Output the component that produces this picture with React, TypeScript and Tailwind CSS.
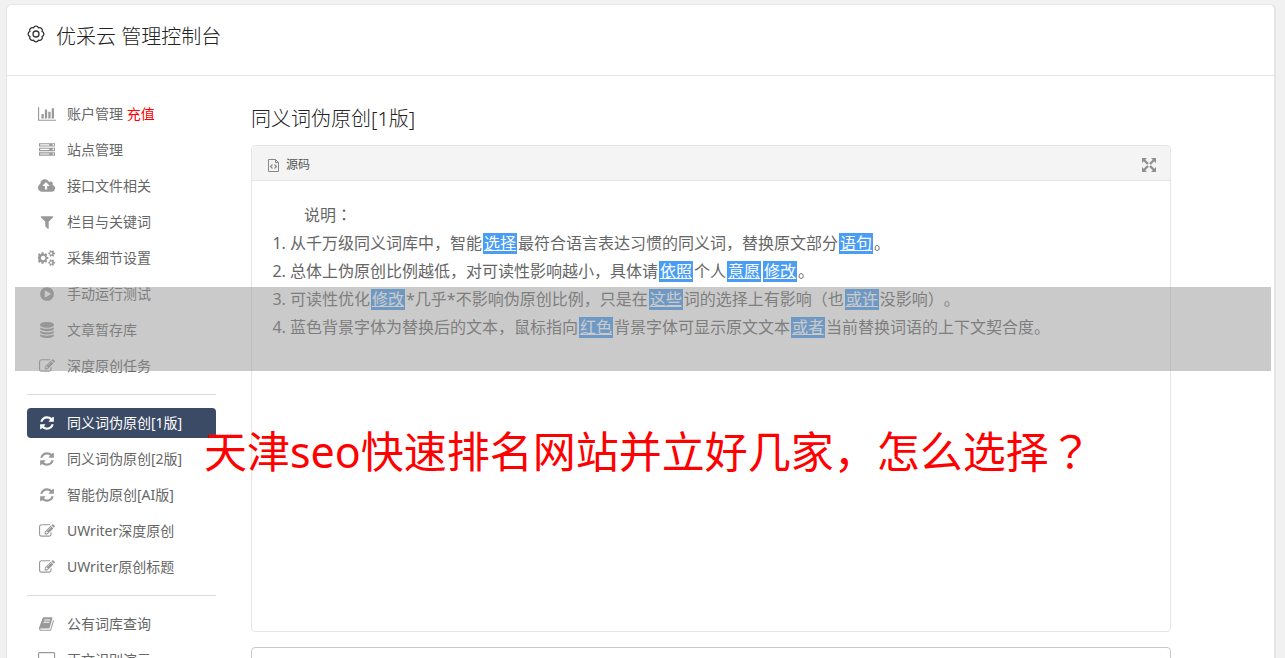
import type { ReactNode } from "react"

const icons = {
  chart: {
    box: "0 0 2048 1792",
    d: "M640 896v512h-256v-512h256zm384-512v1024h-256v-1024h256zm1024 1152v128h-2048v-1536h128v1408h1920zm-640-896v768h-256v-768h256zm384-384v1152h-256v-1152h256z",
  },
  server: {
    box: "0 0 1792 1792",
    d: "M128 1408h1024v-128h-1024v128zm0-512h1024v-128h-1024v128zm1568 448q0-40-28-68t-68-28-68 28-28 68 28 68 68 28 68-28 28-68zm-1568-960h1024v-128h-1024v128zm1568 448q0-40-28-68t-68-28-68 28-28 68 28 68 68 28 68-28 28-68zm0-512q0-40-28-68t-68-28-68 28-28 68 28 68 68 28 68-28 28-68zm96 832v384h-1792v-384h1792zm0-512v384h-1792v-384h1792zm0-512v384h-1792v-384h1792z",
  },
  upload: {
    box: "-64 0 1920 1792",
    d: "M1216 864q0-14-9-23l-352-352q-9-9-23-9t-23 9l-351 351q-10 12-10 24 0 14 9 23t23 9h224v352q0 13 9.5 22.5t22.5 9.5h192q13 0 22.5-9.5t9.5-22.5v-352h224q13 0 22.5-9.5t9.5-22.5zm640 288q0 159-112.5 271.5t-271.5 112.5h-1088q-185 0-316.5-131.5t-131.5-316.5q0-130 70-240t188-165q-2-30-2-43 0-212 150-362t362-150q156 0 285.5 87t188.5 231q71-62 166-62 106 0 181 75t75 181q0 76-41 138 130 31 213.5 135.5t83.5 238.5z",
  },
  filter: {
    box: "0 0 1792 1792",
    d: "M1595 295q17 41-14 70l-493 493v742q0 42-39 59-13 5-25 5-27 0-45-19l-256-256q-19-19-19-45v-486l-493-493q-31-29-14-70 17-39 59-39h1280q42 0 59 39z",
  },
  cogs: {
    box: "0 0 1920 1792",
    d: "M832 896q0-106-75-181t-181-75-181 75-75 181 75 181 181 75 181-75 75-181zm768 512q0-52-38-90t-90-38-90 38-38 90q0 53 37.5 90.5t90.5 37.5 90.5-37.5 37.5-90.5zm0-1024q0-52-38-90t-90-38-90 38-38 90q0 53 37.5 90.5t90.5 37.5 90.5-37.5 37.5-90.5zm-448 421v185q0 10-7 19.5t-16 10.5l-155 24q-11 35-32 76 34 48 90 115 7 11 7 20 0 12-7 19-23 30-82.5 89.5t-78.5 59.5q-11 0-21-7l-115-90q-37 19-77 31-11 108-23 155-7 24-30 24h-186q-11 0-20-7.5t-10-17.5l-23-153q-34-10-75-31l-118 89q-7 7-20 7-11 0-21-8-144-133-144-160 0-9 7-19 10-14 41-53t47-61q-23-44-35-82l-152-24q-10-1-17-9.5t-7-19.5v-185q0-10 7-19.5t16-10.5l155-24q11-35 32-76-34-48-90-115-7-11-7-20 0-12 7-20 22-30 82-89t79-59q11 0 21 7l115 90q34-18 77-32 11-108 23-154 7-24 30-24h186q11 0 20 7.5t10 17.5l23 153q34 10 75 31l118-89q8-7 20-7 11 0 21 8 144 133 144 160 0 8-7 19-12 16-42 54t-45 60q23 48 34 82l152 23q10 2 17 10.5t7 19.5zm768 533v140q0 16-149 31-12 27-30 52 51 113 51 138 0 4-4 7-122 71-124 71-8 0-46-47t-52-68q-20 2-30 2t-30-2q-14 21-52 68t-46 47q-2 0-124-71-4-3-4-7 0-25 51-138-18-25-30-52-149-15-149-31v-140q0-16 149-31 13-29 30-52-51-113-51-138 0-4 4-7 4-2 35-20t59-34 30-16q8 0 46 46.500t52 67.500q20-2 30-2t30 2q51-71 92-112l6-2q4 0 124 70 4 3 4 7 0 25-51 138 17 23 30 52 149 15 149 31zm0-1024v140q0 16-149 31-12 27-30 52 51 113 51 138 0 4-4 7-122 71-124 71-8 0-46-47t-52-68q-20 2-30 2t-30-2q-14 21-52 68t-46 47q-2 0-124-71-4-3-4-7 0-25 51-138-18-25-30-52-149-15-149-31v-140q0-16 149-31 13-29 30-52-51-113-51-138 0-4 4-7 4-2 35-20t59-34 30-16q8 0 46 46.500t52 67.500q20-2 30-2t30 2q51-71 92-112l6-2q4 0 124 70 4 3 4 7 0 25-51 138 17 23 30 52 149 15 149 31z",
  },
  play: {
    box: "0 0 1792 1792",
    d: "M896 128q209 0 385.5 103t279.5 279.500 103 385.500-103 385.500-279.500 279.500-385.500 103-385.500-103-279.500-279.500-103-385.500 103-385.500 279.500-279.500 385.500-103zm384 823q32-18 32-55t-32-55l-544-320q-31-19-64-1-32 19-32 56v640q0 37 32 56 16 8 32 8 17 0 32-9z",
  },
  database: {
    box: "0 0 1792 1792",
    d: "M896 768q237 0 443-43t325-127v170q0 69-103 128t-280 93.500-385 34.500-385-34.500-280-93.500-103-128v-170q119 84 325 127t443 43zm0 768q237 0 443-43t325-127v170q0 69-103 128t-280 93.500-385 34.500-385-34.500-280-93.500-103-128v-170q119 84 325 127t443 43zm0-384q237 0 443-43t325-127v170q0 69-103 128t-280 93.500-385 34.500-385-34.500-280-93.500-103-128v-170q119 84 325 127t443 43zm0-1152q208 0 385 34.500t280 93.500 103 128v128q0 69-103 128t-280 93.500-385 34.500-385-34.500-280-93.500-103-128v-128q0-69 103-128t280-93.500 385-34.500z",
  },
  edit: {
    box: "0 0 1792 1792",
    d: "M888 1184l116-116-152-152-116 116v56h96v96h56zm440-720q-16-16-33 1l-350 350q-17 17-1 33t33-1l350-350q17-17 1-33zm80 594v190q0 119-84.500 203.500t-203.500 84.500h-832q-119 0-203.500-84.500t-84.500-203.500v-832q0-119 84.500-203.500t203.500-84.500h832q63 0 117 25 15 7 18 23 3 17-9 29l-49 49q-14 14-32 8-23-6-45-6h-832q-66 0-113 47t-47 113v832q0 66 47 113t113 47h832q66 0 113-47t47-113v-126q0-13 9-22l64-64q15-15 35-7t20 29zm-96-738l288 288-672 672h-288v-288zm444 132l-92 92-288-288 92-92q28-28 68-28t68 28l152 152q28 28 28 68t-28 68z",
  },
  refresh: {
    box: "0 0 1792 1792",
    d: "M1639 1056q0 5-1 7-64 268-268 434.500t-478 166.500q-146 0-282.500-55t-243.500-157l-129 129q-19 19-45 19t-45-19-19-45v-448q0-26 19-45t45-19h448q26 0 45 19t19 45-19 45l-137 137q71 66 161 102t187 36q134 0 250-65t186-179q11-17 53-117 8-23 30-23h192q13 0 22.500 9.500t9.500 22.500zm25-800v448q0 26-19 45t-45 19h-448q-26 0-45-19t-19-45 19-45l138-138q-148-137-349-137-134 0-250 65t-186 179q-11 17-53 117-8 23-30 23h-199q-13 0-22.500-9.500t-9.500-22.500v-7q65-268 270-434.500t480-166.500q146 0 284 55.500t245 156.500l130-129q19-19 45-19t45 19 19 45z",
  },
  book: {
    box: "0 0 1792 1792",
    d: "M1639 478q40 57 18 129l-275 906q-19 64-76.500 107.500t-122.500 43.500h-923q-77 0-148.500-53.500t-99.500-131.500q-24-67-2-127 0-4 3-27t4-37q1-8-3-21.500t-3-19.500q2-11 8-21t16.500-23.500 16.500-23.500q23-38 45-91.500t30-91.500q3-10 .5-30t-.5-28q3-11 17-28t17-23q21-36 42-92t25-90q1-9-2.500-32t.5-28q4-13 22-30.500t22-22.500q19-26 42.500-84.500t27.500-96.500q1-8-3-25.500t-2-26.500q2-8 9-18t18-23 17-21q8-12 16.500-30.500t15-35 16-36 19.500-32 26.500-23.500 36-11.500 47.500 5.500l-1 3q38-9 51-9h761q74 0 114 56t18 130l-274 906q-36 119-71.500 153.500t-128.500 34.500h-869q-27 0-38 15-11 16-1 43 24 70 144 70h923q29 0 56-15.500t35-41.500l300-987q7-22 5-57 38 15 59 43zm-1064 2q-4 13 2 22.500t20 9.500h608q13 0 25.500-9.500t16.500-22.500l21-64q4-13-2-22.500t-20-9.500h-608q-13 0-25.500 9.500t-16.500 22.500zm-83 256q-4 13 2 22.500t20 9.500h608q13 0 25.500-9.500t16.500-22.500l21-64q4-13-2-22.500t-20-9.500h-608q-13 0-25.500 9.500t-16.500 22.500z",
  },
  desktop: {
    box: "-64 0 1920 1792",
    d: "M1728 992v-832q0-13-9.500-22.500t-22.500-9.500h-1600q-13 0-22.500 9.500t-9.500 22.500v832q0 13 9.500 22.500t22.500 9.500h1600q13 0 22.500-9.500t9.500-22.500zm128-832v1088q0 66-47 113t-113 47h-544q0 37 16 77.500t32 71 16 43.500q0 26-19 45t-45 19h-512q-26 0-45-19t-19-45q0-14 16-44t32-70 16-78h-544q-66 0-113-47t-47-113v-1088q0-66 47-113t113-47h1600q66 0 113 47t47 113z",
  },
}

type IconName = keyof typeof icons

const menuGroups: { icon: IconName; label: string; extra?: string; active?: boolean }[][] = [
  [
    { icon: "chart", label: "账户管理", extra: "充值" },
    { icon: "server", label: "站点管理" },
    { icon: "upload", label: "接口文件相关" },
    { icon: "filter", label: "栏目与关键词" },
    { icon: "cogs", label: "采集细节设置" },
    { icon: "play", label: "手动运行测试" },
    { icon: "database", label: "文章暂存库" },
    { icon: "edit", label: "深度原创任务" },
  ],
  [
    { icon: "refresh", label: "同义词伪原创[1版]", active: true },
    { icon: "refresh", label: "同义词伪原创[2版]" },
    { icon: "refresh", label: "智能伪原创[AI版]" },
    { icon: "edit", label: "UWriter深度原创" },
    { icon: "edit", label: "UWriter原创标题" },
  ],
  [
    { icon: "book", label: "公有词库查询" },
    { icon: "desktop", label: "正文识别演示" },
  ],
]

function Icon({ name }: { name: IconName }) {
  return (
    <svg viewBox={icons[name].box} className="h-4 w-auto" fill="currentColor" aria-hidden="true">
      <path d={icons[name].d} fillRule="evenodd" />
    </svg>
  )
}

function Sidebar() {
  return (
    <nav className="w-[189px] shrink-0 divide-y divide-[#dcdcdc]">
      {menuGroups.map((group, i) => (
        <ul key={i} className="flex flex-col gap-1.5 py-[13px] first:pt-0">
          {group.map((item) => (
            <li key={item.label}>
              <a
                href="#"
                className={
                  item.active
                    ? "flex h-[30px] items-center gap-2.5 rounded bg-[#3b4b66] px-2.5 text-sm text-white"
                    : "flex h-[30px] items-center gap-2.5 rounded px-2.5 text-sm text-[#666]"
                }
              >
                <span className={item.active ? "flex w-5 justify-center" : "flex w-5 justify-center text-[#999]"}>
                  <Icon name={item.icon} />
                </span>
                <span>
                  {item.label}
                  {item.extra && <span className="text-[#ff0000]"> {item.extra}</span>}
                </span>
              </a>
            </li>
          ))}
        </ul>
      ))}
    </nav>
  )
}

function Word({ children }: { children: ReactNode }) {
  return (
    <a href="#" className="mx-px inline-block h-[21px] bg-[#499df5] px-px leading-[21px] text-white underline">
      {children}
    </a>
  )
}

// full-width colon and question mark sit in the middle of their cell
function Mark({ children }: { children: ReactNode }) {
  return (
    <span lang="ja" className="font-['Noto_Sans_CJK_JP',sans-serif]">
      {children}
    </span>
  )
}

function Editor() {
  return (
    <section className="rounded border border-[#e5e5e5]">
      <div className="flex h-[35px] items-center justify-between rounded-t border-b border-[#e5e5e5] bg-[#f4f4f4] px-3.5 pt-[3px]">
        <button type="button" className="flex items-center gap-1.5 text-xs text-[#555]">
          <svg viewBox="0 0 14 16" className="h-4 w-3.5" fill="none" stroke="#888" aria-hidden="true">
            <path d="M2.500 2.500h7l3 3v9h-10z" />
            <path d="M9.500 2.500v3h3" />
            <path d="M6.500 7.500L4.500 9.500l2 2M8.500 7.500l2 2-2 2" strokeWidth="1.200" />
          </svg>
          源码
        </button>
        <button type="button" aria-label="全屏">
          <svg viewBox="0 0 14 14" className="size-3.5" fill="#909090" stroke="#909090" strokeWidth="2.400" aria-hidden="true">
            <path d="M2 2l4 4M12 2L8 6M2 12l4-4M12 12L8 8" />
            <path d="M0 0h5L0 5zM14 0v5L9 0zM0 14V9l5 5zM14 14H9l5-5z" stroke="none" />
          </svg>
        </button>
      </div>
      <div className="min-h-[450px] px-5 pt-[19px] pb-5 text-base leading-7 text-[#666]">
        <p className="indent-8">
          说明<Mark>：</Mark>
        </p>
        <ol className="list-decimal pl-[18px]">
          <li>
            从千万级同义词库中，智能<Word>选择</Word>最符合语言表达习惯的同义词，替换原文部分<Word>语句</Word>。
          </li>
          <li>
            总体上伪原创比例越低，对可读性影响越小，具体请<Word>依照</Word>个人<Word>意愿</Word><Word>修改</Word>。
          </li>
          <li>
            可读性优化<Word>修改</Word>*几乎*不影响伪原创比例，只是在<Word>这些</Word>词的选择上有影响（也<Word>或许</Word>没影响）。
          </li>
          <li>
            蓝色背景字体为替换后的文本，鼠标指向<Word>红色</Word>背景字体可显示原文文本<Word>或者</Word>当前替换词语的上下文契合度。
          </li>
        </ol>
      </div>
    </section>
  )
}

export default function App() {
  return (
    <div className="relative h-screen overflow-hidden bg-[#f1f1f1] pt-1 pr-[9px] pl-1.5 font-['Noto_Sans','Noto_Sans_CJK_SC',sans-serif] [text-spacing-trim:space-all]">
      <div className="rounded-md border border-r-2 border-[#e5e5e5] bg-white">
        <header className="flex h-[71px] items-start gap-[11px] border-b border-[#e5e5e5] px-5 pt-[18px]">
          <svg viewBox="0 0 18 18" className="mt-0.5 size-[18px]" fill="none" stroke="#333" strokeWidth="1.300" strokeLinejoin="round" aria-hidden="true">
            <path d="M15.100 11.530A2.700 2.700 0 0 1 11.530 15.100A2.700 2.700 0 0 1 6.470 15.100A2.700 2.700 0 0 1 2.900 11.530A2.700 2.700 0 0 1 2.900 6.470A2.700 2.700 0 0 1 6.470 2.900A2.700 2.700 0 0 1 11.530 2.900A2.700 2.700 0 0 1 15.100 6.470A2.700 2.700 0 0 1 15.100 11.530z" />
            <circle cx="9" cy="9" r="3" />
          </svg>
          <h1 className="text-xl font-light text-[#222]">优采云 管理控制台</h1>
        </header>
        <div className="flex gap-[35px] pt-[23px] pl-5">
          <Sidebar />
          <main className="mr-[103px] min-w-0 flex-1">
            <h2 className="mt-[5px] mb-3 text-xl leading-[29px] font-light text-[#222]">同义词伪原创[1版]</h2>
            <Editor />
            <textarea
              aria-label="原文内容"
              className="mt-[15px] block h-40 w-full resize-none rounded border border-[#c8c8c8] p-3"
            />
          </main>
        </div>
      </div>

      <div className="pointer-events-none absolute top-[287px] right-3.5 left-[15px] h-[84px] bg-[#959595]/50" />
      <p className="pointer-events-none absolute top-[417px] left-[204px] text-[43px] leading-[64px] whitespace-nowrap text-[#ff0000]">
        天津seo快速排名网站并立好几家，怎么选择<Mark>？</Mark>
      </p>
    </div>
  )
}
